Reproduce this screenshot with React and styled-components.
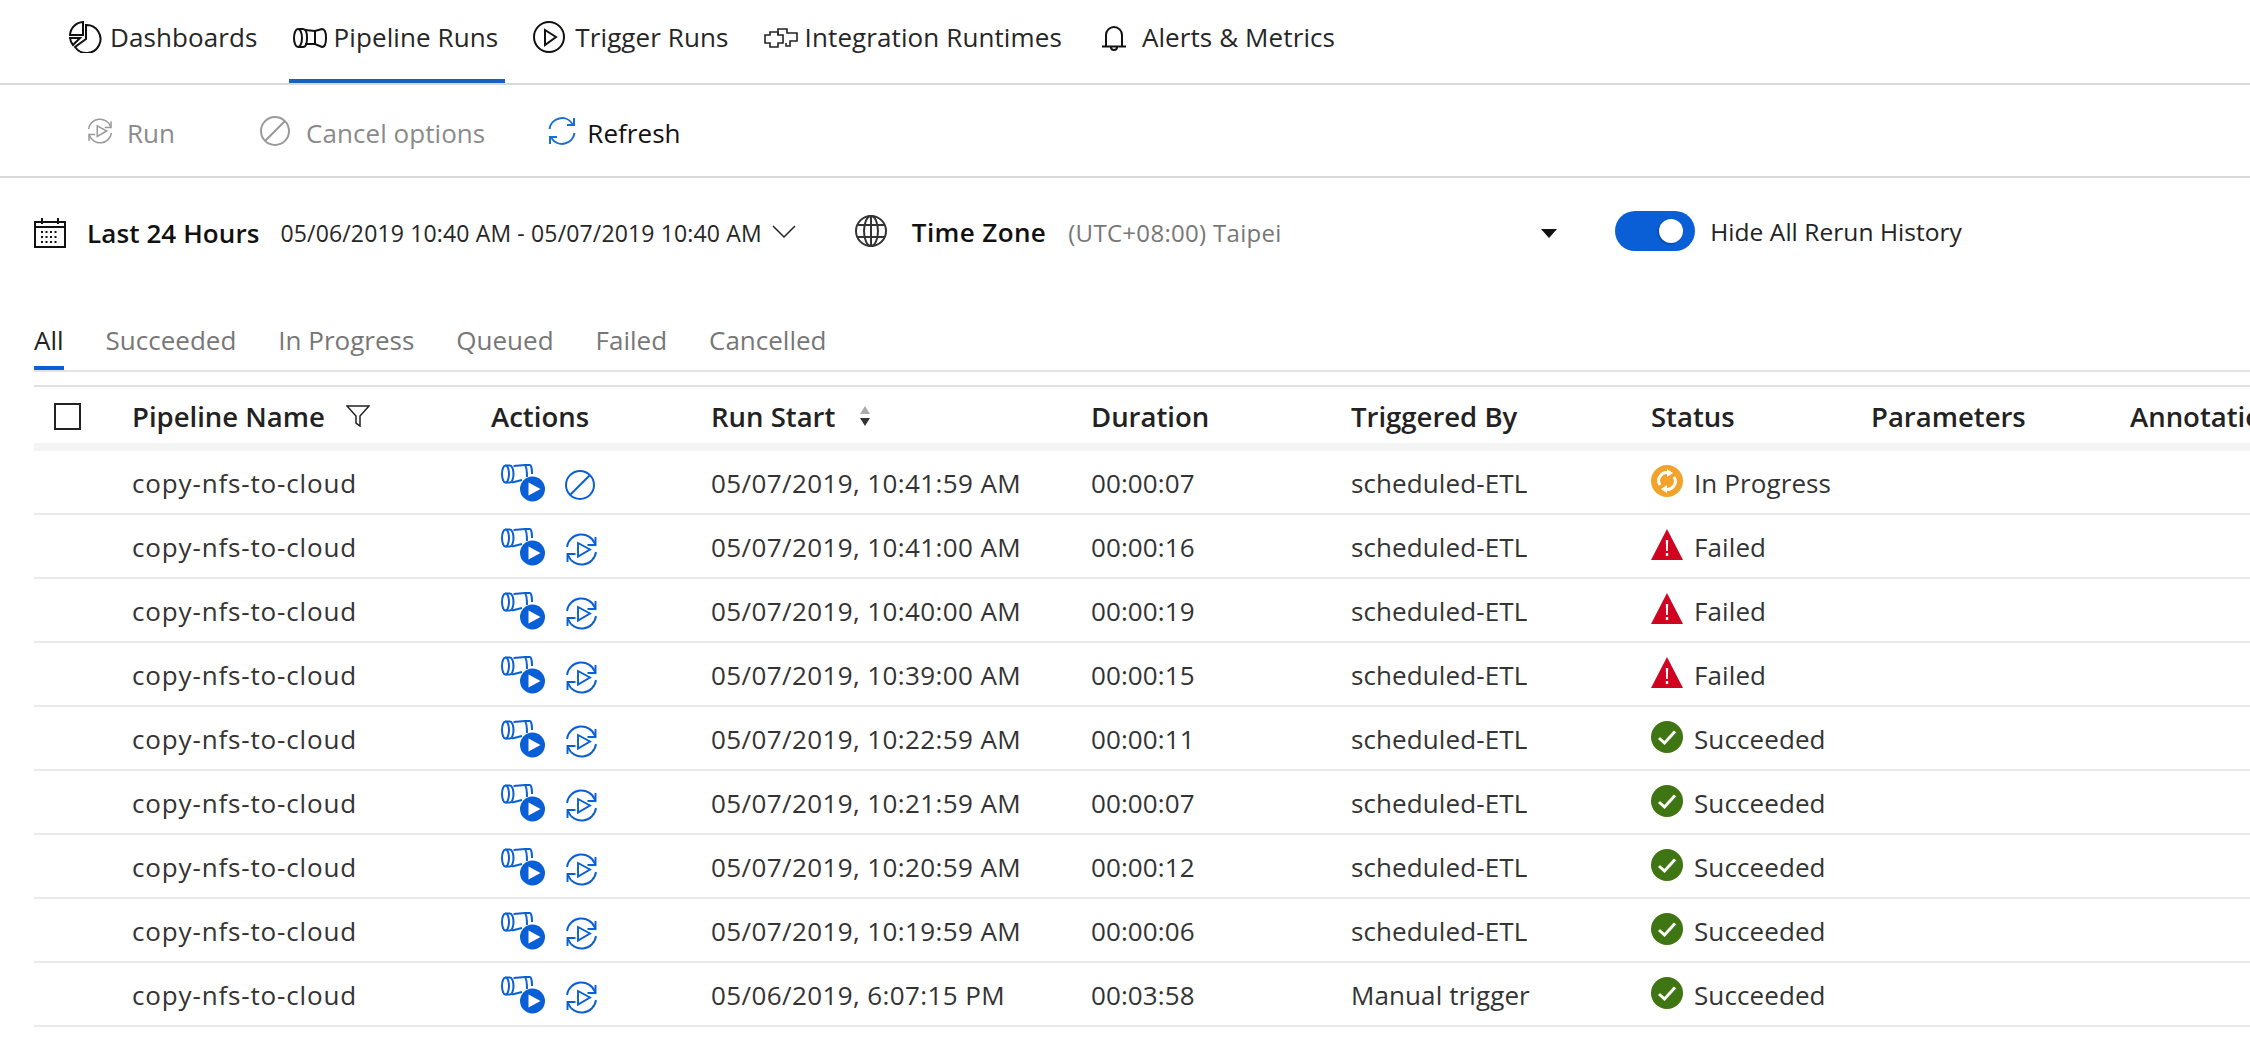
import React from 'react';
import styled, { createGlobalStyle } from 'styled-components';

const BLUE = '#0b5fd6';

const Global = createGlobalStyle`
	html, body {
		margin: 0;
		padding: 0;
		background: #fff;
		overflow: hidden;
	}
	body {
		font-family: "Open Sans", "Noto Sans", "Liberation Sans", sans-serif;
		color: #333;
	}
`;

const Page = styled.div`
	width: 2250px;
	height: 1037px;
	overflow: hidden;
	background: #fff;
`;

const Nav = styled.nav`
	display: flex;
	gap: 24px;
	height: 85px;
	box-sizing: border-box;
	padding-left: 65px;
	border-bottom: 2px solid #d9d9d9;
`;

const NavItem = styled.div`
	display: flex;
	align-items: flex-start;
	gap: 7px;
	height: 83px;
	box-sizing: border-box;
	padding: 19px 7px 0 4px;
	font-size: 26px;
	line-height: 36px;
	letter-spacing: 0.1px;
	color: #262626;
	border-bottom: 4px solid ${(p) => (p.$active ? '#1a60c0' : 'transparent')};
	svg {
		flex: none;
		margin-top: ${(p) => p.$iconTop || 2}px;
	}
`;

const Toolbar = styled.div`
	display: flex;
	align-items: center;
	height: 93px;
	box-sizing: border-box;
	padding-left: 87px;
	border-bottom: 2px solid #d9d9d9;
`;

const ToolButton = styled.div`
	display: flex;
	align-items: center;
	gap: ${(p) => p.$gap}px;
	margin-right: ${(p) => p.$after || 0}px;
	font-size: 26px;
	letter-spacing: 0.05px;
	color: ${(p) => (p.$disabled ? '#8a8a8a' : '#111')};
`;

const ToolLabel = styled.span`
	margin-top: 4px;
`;

const FilterBar = styled.div`
	display: flex;
	align-items: center;
	height: 106px;
	padding-left: 34px;
`;

const CalendarSlot = styled.div`
	display: flex;
	margin-top: 4px;
`;

const DateLabel = styled.span`
	margin: 3px 0 0 21px;
	font-size: 26px;
	font-weight: 600;
	letter-spacing: 0.1px;
	color: #111;
`;

const DateRange = styled.span`
	margin: 3px 0 0 21px;
	font-size: 23px;
	letter-spacing: 0.15px;
	color: #262626;
`;

const ZoneLabel = styled.span`
	margin: 2px 0 0 25px;
	font-size: 26px;
	font-weight: 600;
	letter-spacing: 0.4px;
	color: #111;
`;

const ZoneValue = styled.span`
	width: 473px;
	margin: 2px 0 0 22px;
	font-size: 24px;
	letter-spacing: 0.3px;
	color: #777;
`;

const Caret = styled.span`
	width: 0;
	height: 0;
	margin-top: 5px;
	border-left: 8px solid transparent;
	border-right: 8px solid transparent;
	border-top: 9px solid #111;
`;

const Toggle = styled.div`
	display: flex;
	align-items: center;
	justify-content: flex-end;
	width: 80px;
	height: 40px;
	margin-left: 58px;
	padding-right: 12px;
	box-sizing: border-box;
	border-radius: 20px;
	background: ${BLUE};
`;

const Knob = styled.div`
	width: 24px;
	height: 24px;
	border-radius: 50%;
	background: #fff;
	box-shadow: -1px 1px 2px rgba(0, 0, 0, 0.3);
`;

const ToggleText = styled.span`
	margin-left: 15px;
	font-size: 24.5px;
	letter-spacing: 0.05px;
	color: #222;
`;

const Tabs = styled.div`
	display: flex;
	gap: 42px;
	height: 53px;
	margin: 35px 0 0 34px;
	box-sizing: border-box;
	border-bottom: 2px solid #e2e2e2;
`;

const Tab = styled.div`
	height: 51px;
	box-sizing: border-box;
	padding-top: 3px;
	font-size: 26px;
	line-height: 36px;
	color: ${(p) => (p.$active ? '#222' : '#777')};
	border-bottom: ${(p) => (p.$active ? `4px solid ${BLUE}` : 'none')};
`;

const Table = styled.div`
	margin: 13px 0 0 34px;
	border-top: 2px solid #e0e0e0;
`;

const gridCols = '98px 359px 220px 380px 260px 300px 220px 259px 1fr';

const HeadRow = styled.div`
	display: grid;
	grid-template-columns: ${gridCols};
	align-items: center;
	height: 64px;
	box-sizing: border-box;
	padding-top: 2px;
	border-bottom: 8px solid #f4f4f4;
	font-size: 27.5px;
	font-weight: 600;
	color: #222;
	white-space: nowrap;
	> span {
		display: flex;
		align-items: center;
	}
`;

const Checkbox = styled.div`
	width: 27px;
	height: 27px;
	margin-left: 20px;
	border: 2px solid #222;
	box-sizing: border-box;
`;

const Row = styled.div`
	display: grid;
	grid-template-columns: ${gridCols};
	align-items: center;
	height: 64px;
	box-sizing: border-box;
	padding-top: 2px;
	border-bottom: 2px solid #eaeaea;
	font-size: 26px;
	letter-spacing: 0.1px;
	color: #333;
	white-space: nowrap;
`;

const NameCell = styled.span`
	letter-spacing: 0.85px;
`;

const StartCell = styled.span`
	letter-spacing: 0.4px;
`;

const ActionCell = styled.div`
	display: flex;
	align-items: center;
	gap: 20px;
	padding-left: 10px;
	svg:last-child {
		margin-top: 4px;
	}
`;

const StatusCell = styled.div`
	display: flex;
	align-items: center;
	gap: 11px;
	svg {
		flex: none;
		margin-top: -4px;
	}
`;

const ChevronSvg = styled.svg`
	margin: 2px 59px 0 10px;
`;

const FilterSvg = styled.svg`
	margin-left: 21px;
`;

const SortSvg = styled.svg`
	margin-left: 23px;
`;

const line = { fill: 'none', stroke: 'currentColor', strokeWidth: 2 };

const DashIcon = () => (
	<svg width="34" height="32" viewBox="0 0 34 32" {...line} color="#111">
		<path d="M17 4a14 14 0 1 1-11 22l11-8z" />
		<path d="M14 1a14 14 0 0 0-13 13h13z" />
		<path d="M1 17h10l-7 7a13 13 0 0 1-3-7z" />
	</svg>
);

const PipeIcon = () => (
	<svg width="34" height="20" viewBox="0 0 34 20" {...line} color="#111">
		<ellipse cx="5" cy="10" rx="4" ry="9" />
		<path d="M5 1h5c2.500 0 4 4 4 9s-1.500 9-4 9H5" />
		<path d="M12 2l10 1 7-2c2.500 0 4 4 4 9s-1.500 9-4 9l-7-3H12" />
		<path d="M22 3v13" />
	</svg>
);

const TriggerIcon = () => (
	<svg width="35" height="32" viewBox="0 0 35 32" {...line} color="#111">
		<circle cx="16" cy="16" r="15" />
		<path d="M12 9l11 7-11 8z" />
	</svg>
);

const RuntimeIcon = () => (
	<svg width="34" height="20" viewBox="0 0 34 20" {...line} strokeWidth="1.600" color="#222">
		<path d="M1 7h5V4h8v3h5v8h-5v4H6v-4H1z" />
		<path d="M14 7V1h9v4h10v8h-7v5h-4v-3" />
	</svg>
);

const BellIcon = () => (
	<svg width="38" height="28" viewBox="0 0 38 28" {...line} color="#111">
		<path d="M9 21V10a8 8 0 0 1 16 0v11" />
		<path d="M5 21.500h24" />
		<path d="M14 22a3 3 0 0 0 6 0" />
	</svg>
);

const RerunIcon = ({ color = BLUE, size = 33 }) => (
	<svg width={size} height={size} viewBox="0 0 33 33" {...line} strokeWidth="1.900" color={color}>
		<path d="M2 14A14.500 14.500 0 0 1 30 11" />
		<path d="M30.500 4v8h-8" />
		<path d="M31 19A14.500 14.500 0 0 1 3 22" />
		<path d="M2.500 29v-8h8" />
		<path d="M13 10l12 6.500-12 7z" />
	</svg>
);

const CancelIcon = ({ color = BLUE, size = 30 }) => (
	<svg width={size} height={size} viewBox="0 0 30 30" {...line} color={color}>
		<circle cx="15" cy="15" r="14" />
		<path d="M5 25L25 5" />
	</svg>
);

const RefreshIcon = () => (
	<svg width="28" height="28" viewBox="0 0 28 28" {...line} color="#1a6fd0">
		<path d="M1.500 12a12.500 12.500 0 0 1 23-5" />
		<path d="M26 1v7h-7" />
		<path d="M26.500 16a12.500 12.500 0 0 1-23 5" />
		<path d="M2 27v-7h7" />
	</svg>
);

const CalendarIcon = () => (
	<svg width="32" height="30" viewBox="0 0 32 30" fill="none" stroke="#111" strokeWidth="2">
		<rect x="1" y="4" width="30" height="25" />
		<path d="M1 9h30M8 0v6M24 0v6" />
		<path d="M7 14h18M7 19h18M7 24h18" strokeDasharray="2 2.500" />
	</svg>
);

const GlobeIcon = () => (
	<svg width="32" height="32" viewBox="0 0 32 32" fill="none" stroke="#333" strokeWidth="2">
		<circle cx="16" cy="16" r="15" />
		<ellipse cx="16" cy="16" rx="7" ry="15" />
		<path d="M3 10h26M3 22h26M16 1v30" />
	</svg>
);

const Chevron = () => (
	<ChevronSvg width="24" height="14" viewBox="0 0 24 14" fill="none" stroke="#222" strokeWidth="1.500">
		<path d="M1 1l11 11L23 1" />
	</ChevronSvg>
);

const FilterIcon = () => (
	<FilterSvg width="24" height="22" viewBox="0 0 24 22" fill="none" stroke="#222" strokeWidth="1.500">
		<path d="M1 1h22l-9 10v10l-4-3v-7z" />
	</FilterSvg>
);

const SortIcon = () => (
	<SortSvg width="14" height="20" viewBox="0 0 14 20">
		<path d="M7 0l5 8H2z" fill="#aaa" />
		<path d="M7 20l5-8H2z" fill="#333" />
	</SortSvg>
);

const RunNowIcon = () => (
	<svg width="44" height="38" viewBox="0 0 44 38">
		<g fill="none" stroke={BLUE} strokeWidth="2">
			<ellipse cx="4.500" cy="10" rx="3.500" ry="8.500" />
			<path d="M4.500 1.500H9c2 0 3.500 4 3.500 8.500S11 18.500 9 18.500H4.500" />
			<path d="M12.500 2L24 1h5c1 0 2 3 2 9" />
			<path d="M24 1c1.500 2 2 6 2 12" />
			<path d="M11 18.500L21 16" />
		</g>
		<circle cx="31.500" cy="25" r="12.500" fill={BLUE} />
		<path d="M27.500 18.500v13l12-6.500z" fill="#fff" />
	</svg>
);

const Spinning = () => (
	<svg width="32" height="32" viewBox="0 0 32 32">
		<circle cx="16" cy="16" r="16" fill="#f2a32a" />
		<g fill="none" stroke="#fff" strokeWidth="3">
			<path d="M9 20a8 8 0 0 1 9-12" />
			<path d="M23 12a8 8 0 0 1-9 12" />
		</g>
		<path d="M16 4l6 4-6 4zM16 28l-6-4 6-4z" fill="#fff" />
	</svg>
);

const FailedIcon = () => (
	<svg width="32" height="32" viewBox="0 0 32 32">
		<path d="M16 0L32 31H0z" fill="#d0021f" />
		<path d="M14.800 11h2.400l-.4 11h-1.600zM14.800 24h2.400v3h-2.400z" fill="#fff" />
	</svg>
);

const SuccessIcon = () => (
	<svg width="32" height="32" viewBox="0 0 32 32">
		<circle cx="16" cy="16" r="16" fill="#3f7512" />
		<path d="M8 17l5.500 5L24 10.500" fill="none" stroke="#fff" strokeWidth="3" />
	</svg>
);

const statusIcons = {
	'In Progress': <Spinning />,
	Failed: <FailedIcon />,
	Succeeded: <SuccessIcon />,
};

const runs = [
	['05/07/2019, 10:41:59 AM', '00:00:07', 'scheduled-ETL', 'In Progress'],
	['05/07/2019, 10:41:00 AM', '00:00:16', 'scheduled-ETL', 'Failed'],
	['05/07/2019, 10:40:00 AM', '00:00:19', 'scheduled-ETL', 'Failed'],
	['05/07/2019, 10:39:00 AM', '00:00:15', 'scheduled-ETL', 'Failed'],
	['05/07/2019, 10:22:59 AM', '00:00:11', 'scheduled-ETL', 'Succeeded'],
	['05/07/2019, 10:21:59 AM', '00:00:07', 'scheduled-ETL', 'Succeeded'],
	['05/07/2019, 10:20:59 AM', '00:00:12', 'scheduled-ETL', 'Succeeded'],
	['05/07/2019, 10:19:59 AM', '00:00:06', 'scheduled-ETL', 'Succeeded'],
	['05/06/2019, 6:07:15 PM', '00:03:58', 'Manual trigger', 'Succeeded'],
];

const App = () => (
	<Page>
		<Global />
		<Nav>
			<NavItem><DashIcon />Dashboards</NavItem>
			<NavItem $active $iconTop={9}><PipeIcon />Pipeline Runs</NavItem>
			<NavItem><TriggerIcon />Trigger Runs</NavItem>
			<NavItem $iconTop={9}><RuntimeIcon />Integration Runtimes</NavItem>
			<NavItem $iconTop={6}><BellIcon />Alerts &amp; Metrics</NavItem>
		</Nav>
		<Toolbar>
			<ToolButton $disabled $gap={14} $after={85}><RerunIcon color="#999" size={26} /><ToolLabel>Run</ToolLabel></ToolButton>
			<ToolButton $disabled $gap={16} $after={63}><CancelIcon color="#999" /><ToolLabel>Cancel options</ToolLabel></ToolButton>
			<ToolButton $gap={11}><RefreshIcon /><ToolLabel>Refresh</ToolLabel></ToolButton>
		</Toolbar>
		<FilterBar>
			<CalendarSlot><CalendarIcon /></CalendarSlot>
			<DateLabel>Last 24 Hours</DateLabel>
			<DateRange>05/06/2019 10:40 AM - 05/07/2019 10:40 AM</DateRange>
			<Chevron />
			<GlobeIcon />
			<ZoneLabel>Time Zone</ZoneLabel>
			<ZoneValue>(UTC+08:00) Taipei</ZoneValue>
			<Caret />
			<Toggle><Knob /></Toggle>
			<ToggleText>Hide All Rerun History</ToggleText>
		</FilterBar>
		<Tabs>
			<Tab $active>All</Tab>
			<Tab>Succeeded</Tab>
			<Tab>In Progress</Tab>
			<Tab>Queued</Tab>
			<Tab>Failed</Tab>
			<Tab>Cancelled</Tab>
		</Tabs>
		<Table>
			<HeadRow>
				<span><Checkbox /></span>
				<span>Pipeline Name<FilterIcon /></span>
				<span>Actions</span>
				<span>Run Start<SortIcon /></span>
				<span>Duration</span>
				<span>Triggered By</span>
				<span>Status</span>
				<span>Parameters</span>
				<span>Annotations</span>
			</HeadRow>
			{runs.map(([start, duration, by, status], i) => (
				<Row key={i}>
					<span />
					<NameCell>copy-nfs-to-cloud</NameCell>
					<ActionCell>
						<RunNowIcon />
						{i === 0 ? <CancelIcon /> : <RerunIcon />}
					</ActionCell>
					<StartCell>{start}</StartCell>
					<span>{duration}</span>
					<span>{by}</span>
					<StatusCell>{statusIcons[status]}{status}</StatusCell>
				</Row>
			))}
		</Table>
	</Page>
);

export default App;
